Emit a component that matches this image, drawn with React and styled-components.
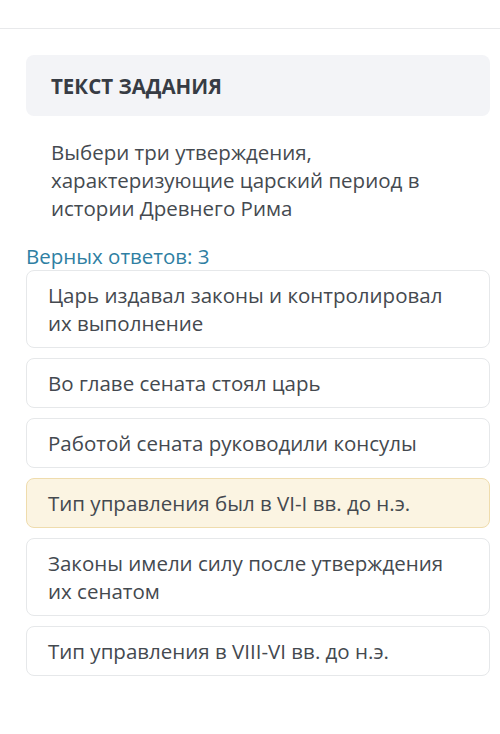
import styled, { createGlobalStyle } from "styled-components";

const GlobalStyle = createGlobalStyle`
  body {
    margin: 0;
    background: #ffffff;
    font-family: "Open Sans", "Noto Sans", sans-serif;
  }
`;

const Page = styled.div`
  width: 500px;
  min-height: 734px;
  background: #ffffff;
  box-sizing: border-box;
`;

const TopBar = styled.div`
  height: 28px;
  border-bottom: 1px solid #e8e9eb;
`;

const Content = styled.div`
  padding: 26px 10px 0 26px;
  display: flex;
  flex-direction: column;
`;

const TaskHeader = styled.div`
  height: 61px;
  background: #f3f4f7;
  border-radius: 8px;
  display: flex;
  align-items: center;
  padding: 0 25px;
  box-sizing: border-box;
  font-size: 20.5px;
  font-weight: 700;
  color: #373c44;
`;

const Question = styled.div`
  padding: 22px 40px 0 25px;
  font-size: 20.5px;
  line-height: 28px;
  color: #454a50;
`;

const Counter = styled.div`
  margin-top: 21px;
  font-size: 20.5px;
  line-height: 26px;
  color: #2f7fa3;
`;

const Options = styled.div`
  margin-top: 1px;
  display: flex;
  flex-direction: column;
  gap: 10px;
`;

const Option = styled.div`
  padding: 10px 36px 10px 21px;
  border: 1px solid ${(p) => (p.$selected ? "#efdcad" : "#e6e8ea")};
  background: ${(p) => (p.$selected ? "#fbf4e2" : "#ffffff")};
  border-radius: 8px;
  font-size: 20.5px;
  line-height: 28px;
  color: #44494f;
`;

const options = [
  { text: "Царь издавал законы и контролировал их выполнение" },
  { text: "Во главе сената стоял царь" },
  { text: "Работой сената руководили консулы" },
  { text: "Тип управления был в VI-I вв. до н.э.", selected: true },
  { text: "Законы имели силу после утверждения их сенатом" },
  { text: "Тип управления в VIII-VI вв. до н.э." },
];

export default function App() {
  return (
    <Page>
      <GlobalStyle />
      <TopBar />
      <Content>
        <TaskHeader>ТЕКСТ ЗАДАНИЯ</TaskHeader>
        <Question>
          Выбери три утверждения, характеризующие царский период в истории
          Древнего Рима
        </Question>
        <Counter>Верных ответов: 3</Counter>
        <Options>
          {options.map((o) => (
            <Option key={o.text} $selected={o.selected}>
              {o.text}
            </Option>
          ))}
        </Options>
      </Content>
    </Page>
  );
}
